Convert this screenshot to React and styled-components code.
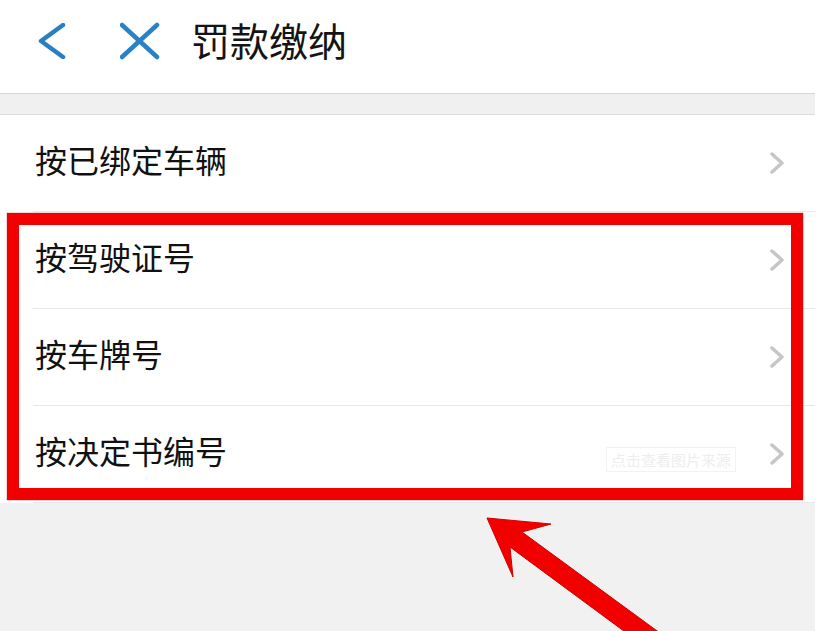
import styled, { createGlobalStyle } from 'styled-components';

const GlobalStyle = createGlobalStyle`
  body {
    margin: 0;
    background: #ffffff;
    font-family: "Noto Sans CJK SC", "Noto Sans", sans-serif;
  }
`;

const rows = ['按已绑定车辆', '按驾驶证号', '按车牌号', '按决定书编号'];

export default function App() {
  return (
    <>
      <GlobalStyle />
      <Page>
        <Header>
          <BackIcon width="28" height="36" viewBox="0 0 28 36">
            <polyline points="25,2 3,18 25,34" />
          </BackIcon>
          <CloseIcon width="40" height="40" viewBox="0 0 40 40">
            <line x1="2" y1="4" x2="37" y2="36" />
            <line x1="37" y1="4" x2="2" y2="36" />
          </CloseIcon>
          <Title>罚款缴纳</Title>
        </Header>

        <Band />

        <List>
          {rows.map((label, i) => (
            <Row key={label}>
              <Label>{label}</Label>
              {i === rows.length - 1 && <Watermark>点击查看图片来源</Watermark>}
              <Chevron width="16" height="22" viewBox="0 0 16 22">
                <polyline points="3,2 13,11 3,20" />
              </Chevron>
            </Row>
          ))}
        </List>

        <Highlight />

        <Arrow width="815" height="631" viewBox="0 0 815 631">
          <polygon points="487,518 551,524 522,532 664,636 636,640 510,547 513,577" />
        </Arrow>
      </Page>
    </>
  );
}

const Page = styled.div`
  position: relative;
  width: 815px;
  height: 631px;
  background: #f1f1f1;
  overflow: hidden;
`;

const Header = styled.div`
  height: 94px;
  background: #ffffff;
  border-bottom: 1px solid #d6d6d6;
  display: flex;
  align-items: center;
  padding-left: 38px;
  padding-bottom: 12px;
  box-sizing: border-box;
`;

const BackIcon = styled.svg`
  fill: none;
  stroke: #2b7fc0;
  stroke-width: 4.5;
  stroke-linecap: round;
  stroke-linejoin: round;
`;

const CloseIcon = styled.svg`
  margin-left: 54px;
  stroke: #2a82c6;
  stroke-width: 4.5;
  stroke-linecap: round;
`;

const Title = styled.div`
  margin-left: 31px;
  font-size: 39px;
  color: #141414;
  line-height: 1;
  margin-top: -2px;
`;

const Band = styled.div`
  height: 20px;
  background: #f0f0f0;
  border-bottom: 1px solid #dcdcdc;
`;

const List = styled.div`
  background: #ffffff;
  padding-left: 33px;
`;

const Row = styled.div`
  height: 96px;
  display: flex;
  align-items: center;
  padding-left: 2px;
  padding-right: 30px;
  border-bottom: 1px solid #e8e8e8;
`;

const Label = styled.div`
  flex: 1;
  font-size: 32px;
  color: #111111;
  line-height: 1;
  margin-top: -8px;
`;

const Watermark = styled.div`
  font-size: 15px;
  line-height: 1;
  color: #eeeeee;
  border: 1px solid #f2f2f2;
  padding: 4px 4px;
  margin-right: 33px;
  margin-top: 10px;
`;

const Chevron = styled.svg`
  fill: none;
  stroke: #c6c6c6;
  stroke-width: 3.5;
  stroke-linecap: round;
  stroke-linejoin: round;
`;

const Highlight = styled.div`
  position: absolute;
  left: 7px;
  top: 213px;
  width: 796px;
  height: 287px;
  box-sizing: border-box;
  border: 12px solid #f00000;
  box-shadow: 0 0 1px #b00000;
`;

const Arrow = styled.svg`
  position: absolute;
  left: 0;
  top: 0;
  fill: #f20000;
  stroke: #d00000;
  stroke-width: 1;
`;
